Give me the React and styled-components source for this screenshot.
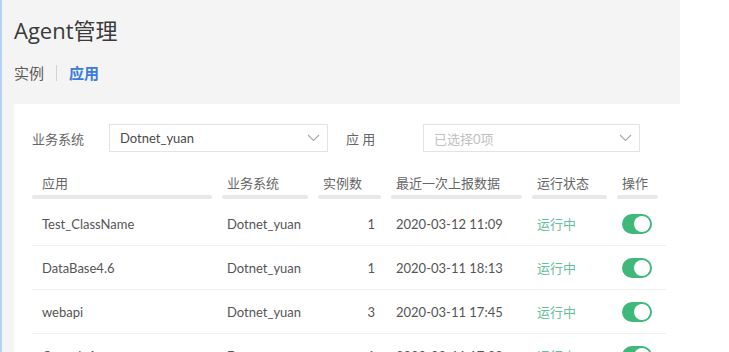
import React from "react";
import styled, { createGlobalStyle } from "styled-components";

const Global = createGlobalStyle`
  html, body { margin: 0; padding: 0; background: #fff; }
  body { font-family: Lato, "Noto Sans CJK SC", sans-serif; color: #5c5c5c; }
  * { box-sizing: border-box; }
`;

const Page = styled.div`
  width: 680px;
  height: 352px;
  overflow: hidden;
  background: #f4f4f4;
  border-left: 2px solid #b5d3f7;
  padding-left: 12px;
  display: flex;
  flex-direction: column;
`;

const Header = styled.div`
  padding-top: 16px;
  display: flex;
  flex-direction: column;
`;

const Title = styled.h1`
  margin: 0;
  font-family: "Open Sans", "Noto Sans CJK SC", sans-serif;
  font-size: 22px;
  line-height: 28px;
  font-weight: 400;
  color: #3a3a3a;
`;

const Tabs = styled.div`
  margin-top: 19px;
  display: flex;
  align-items: center;
  height: 20px;
`;

const Tab = styled.span`
  font-size: 15px;
  line-height: 20px;
  color: ${(p) => (p.$active ? "#3b7bdc" : "#5a5a5a")};
  font-weight: ${(p) => (p.$active ? 600 : 400)};
`;

const Divider = styled.span`
  width: 1px;
  height: 16px;
  background: #d3d3d3;
  margin: 0 12px;
`;

const Card = styled.div`
  margin-top: 21px;
  flex: 1;
  background: #fff;
  padding: 20px 14px 0 18px;
`;

const FilterRow = styled.div`
  display: flex;
  align-items: center;
  height: 28px;
`;

const FilterLabel = styled.span`
  width: 77px;
  font-size: 13px;
  color: #666;
  margin-left: ${(p) => p.$offset || 0}px;
`;

const Select = styled.div`
  width: ${(p) => p.$width}px;
  height: 28px;
  border: 1px solid #e3e3e3;
  display: flex;
  align-items: center;
  justify-content: space-between;
  padding: 0 7px 0 10px;
  font-size: 13px;
  color: ${(p) => (p.$placeholder ? "#c0c0c0" : "#4a4a4a")};
`;

const Chevron = () => (
  <svg width="13" height="8" viewBox="0 0 13 8">
    <polyline points="1,1 6.5,6.5 12,1" fill="none" stroke="#a8a8a8" strokeWidth="1.1" />
  </svg>
);

const Table = styled.div`
  margin-top: 21px;
  width: 634px;
`;

const cols = "180px 86px 63px 131px 75px 41px";

const HeadRow = styled.div`
  display: grid;
  grid-template-columns: ${cols};
  column-gap: 10px;
`;

const HeadCell = styled.div`
  font-size: 13px;
  line-height: 20px;
  color: #666;
  padding-left: ${(p) => (p.$first ? 10 : 5)}px;
  padding-bottom: 6px;
  position: relative;
  &::after {
    content: "";
    position: absolute;
    left: 0;
    right: 0;
    bottom: 0;
    height: 4px;
    border-radius: 2px;
    background: #e8e8e8;
  }
`;

const Body = styled.div`
  margin-top: 3px;
`;

const Row = styled.div`
  display: grid;
  grid-template-columns: ${cols};
  column-gap: 10px;
  align-items: center;
  height: 44px;
  border-bottom: 1px solid #f0f0f0;
`;

const Cell = styled.div`
  font-size: 13px;
  color: #555;
  padding-left: ${(p) => (p.$first ? 10 : 5)}px;
  padding-right: ${(p) => (p.$num ? 6 : 0)}px;
  text-align: ${(p) => (p.$num ? "right" : "left")};
  white-space: nowrap;
`;

const Status = styled(Cell)`
  color: #66c09b;
`;

const Toggle = styled.span`
  display: inline-block;
  width: 30px;
  height: 20px;
  border-radius: 10px;
  background: #3fb87a;
  position: relative;
  vertical-align: middle;
  &::after {
    content: "";
    position: absolute;
    right: 2px;
    top: 2px;
    width: 16px;
    height: 16px;
    border-radius: 50%;
    background: #fff;
  }
`;

const rows = [
  ["Test_ClassName", "Dotnet_yuan", "1", "2020-03-12 11:09"],
  ["DataBase4.6", "Dotnet_yuan", "1", "2020-03-11 18:13"],
  ["webapi", "Dotnet_yuan", "3", "2020-03-11 17:45"],
  ["ConsoleApp", "Dotnet_yuan", "1", "2020-03-11 17:20"],
];

export default function App() {
  return (
    <>
      <Global />
      <Page>
        <Header>
          <Title>Agent管理</Title>
          <Tabs>
            <Tab>实例</Tab>
            <Divider />
            <Tab $active>应用</Tab>
          </Tabs>
        </Header>
        <Card>
          <FilterRow>
            <FilterLabel>业务系统</FilterLabel>
            <Select $width={219}>
              <span>Dotnet_yuan</span>
              <Chevron />
            </Select>
            <FilterLabel $offset={18}>应 用</FilterLabel>
            <Select $width={217} $placeholder>
              <span>已选择0项</span>
              <Chevron />
            </Select>
          </FilterRow>
          <Table>
            <HeadRow>
              <HeadCell $first>应用</HeadCell>
              <HeadCell>业务系统</HeadCell>
              <HeadCell>实例数</HeadCell>
              <HeadCell>最近一次上报数据</HeadCell>
              <HeadCell>运行状态</HeadCell>
              <HeadCell>操作</HeadCell>
            </HeadRow>
            <Body>
              {rows.map((r, i) => (
                <Row key={i}>
                  <Cell $first>{r[0]}</Cell>
                  <Cell>{r[1]}</Cell>
                  <Cell $num>{r[2]}</Cell>
                  <Cell>{r[3]}</Cell>
                  <Status>运行中</Status>
                  <Cell>
                    <Toggle />
                  </Cell>
                </Row>
              ))}
            </Body>
          </Table>
        </Card>
      </Page>
    </>
  );
}
